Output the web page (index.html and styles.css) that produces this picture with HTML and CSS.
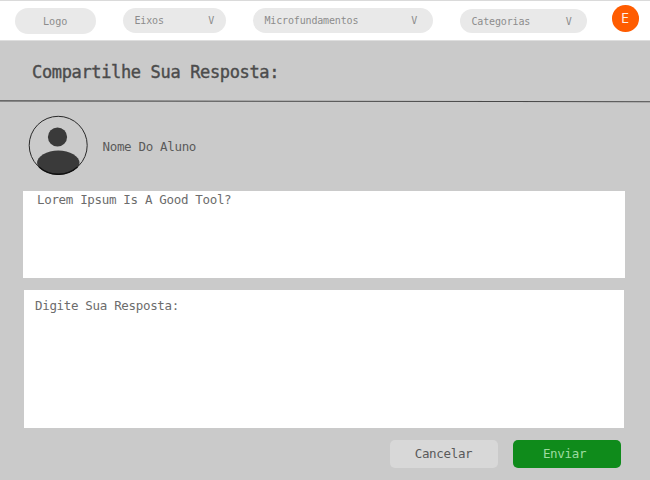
FILE: index.html
```html
<!DOCTYPE html>
<html lang="pt-BR">
<head>
<meta charset="utf-8">
<title>Compartilhe Sua Resposta</title>
<link rel="stylesheet" href="styles.css">
</head>
<body>
<header class="topbar">
  <div class="pill logo">Logo</div>
  <div class="pill eixos"><span>Eixos</span><span>V</span></div>
  <div class="pill micro"><span>Microfundamentos</span><span>V</span></div>
  <div class="pill categorias"><span>Categorias</span><span>V</span></div>
  <div class="badge">E</div>
</header>
<h1 class="title">Compartilhe Sua Resposta:</h1>
<svg class="rule" width="650" height="4" viewBox="0 0 650 4"><path d="M0 0.9L650 1.7" stroke="#484848" stroke-width="1.1"/></svg>
<main>
  <section class="student">
    <svg class="avatar" width="60" height="60" viewBox="0 0 60 60">
      <defs><clipPath id="face"><circle cx="30.2" cy="30.3" r="29.2"/></clipPath></defs>
      <g clip-path="url(#face)" fill="#3a3a3a">
        <circle cx="29.5" cy="22" r="9.6"/>
        <ellipse cx="30.3" cy="48" rx="21.2" ry="12.4"/>
      </g>
      <circle cx="30.2" cy="30.3" r="29" fill="none" stroke="#292929"/>
      <path d="M11 52A29 29 0 0 0 49.5 52" fill="none" stroke="#101010" stroke-width="1.4"/>
    </svg>
    <span class="name">Nome Do Aluno</span>
  </section>
  <section class="box question">Lorem Ipsum Is A Good Tool?</section>
  <section class="box answer">Digite Sua Resposta:</section>
  <div class="actions">
    <button class="btn cancel">Cancelar</button>
    <button class="btn send">Enviar</button>
  </div>
</main>
</body>
</html>
```
FILE: styles.css
```css
* { box-sizing: border-box; }
body {
  margin: 0;
  height: 480px;
  overflow: hidden;
  background: #cacaca;
  color: #5a5a5a;
  font: 12.5px/16px "DejaVu Sans Mono", monospace;
  letter-spacing: -0.33px;
}
.topbar {
  display: flex;
  align-items: flex-start;
  height: 41px;
  padding: 7px 0 0 15px;
  background: #fff;
  border-top: 1px solid #dadada;
  border-bottom: 1px solid #dedede;
}
.pill {
  display: flex;
  justify-content: space-between;
  height: 25px;
  padding: 0 12px 0 11.5px;
  border-radius: 13px;
  background: #e9e9e9;
  color: #8c8c8c;
  font-size: 10px;
  line-height: 25px;
  letter-spacing: -0.16px;
}
.logo {
  width: 81px;
  height: 26px;
  justify-content: center;
  font-size: 10.2px;
  line-height: 27px;
  letter-spacing: 0;
}
.eixos { width: 103px; margin-left: 27px; }
.micro { width: 180px; margin-left: 27px; padding-right: 16px; }
.categorias { width: 126.5px; height: 24px; margin: 1px 0 0 27px; padding-right: 15px; }
.badge {
  width: 26.5px;
  height: 26.5px;
  margin: -3px 0 0 25.5px;
  border-radius: 50%;
  background: #ff5c00;
  color: #fff0e6;
  font: 13px/27px Inter, sans-serif;
  letter-spacing: 0;
  text-align: center;
}
.title {
  height: 59px;
  margin: 0;
  padding-left: 32px;
  color: #4c4c4c;
  font-size: 17px;
  font-weight: 400;
  line-height: 62px;
  letter-spacing: -0.35px;
  -webkit-text-stroke: 0.4px #4c4c4c;
}
.rule { display: block; }
main { padding: 11px 25px 0 23px; }
.student {
  display: flex;
  align-items: center;
  height: 60px;
  padding-left: 5px;
}
.name { margin: 4px 0 0 14.5px; }
.box { background: #fff; color: #6c6c6c; }
.question { height: 86.5px; margin-top: 16px; padding: 1px 14px; }
.answer { height: 137.5px; margin: 12.5px 1px 0; padding: 8px 11px; }
.actions {
  display: flex;
  justify-content: flex-end;
  gap: 15px;
  margin: 12.5px 4.5px 0 0;
}
.btn {
  width: 108px;
  height: 28px;
  padding: 0;
  border: 0;
  border-radius: 5px;
  font: inherit;
  letter-spacing: inherit;
}
.cancel { background: #d8d8d8; color: #5a5a5a; }
.send { background: #0f8b1b; color: #9ddba0; padding-right: 4px; }
```
